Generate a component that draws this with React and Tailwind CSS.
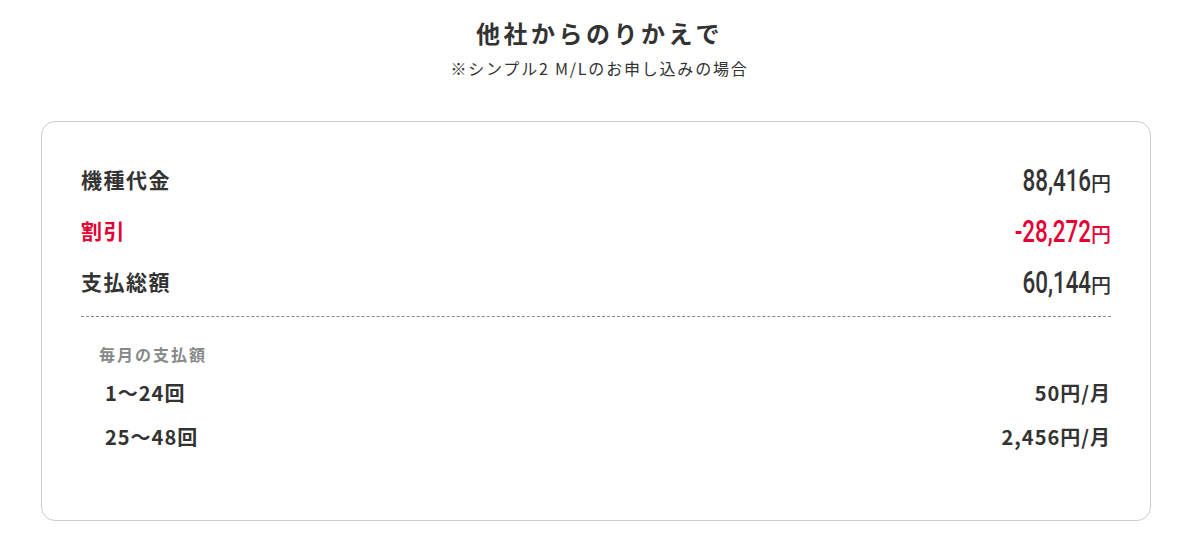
import React from "react";

const jp = { fontFamily: '"Noto Sans CJK JP", "Noto Sans", sans-serif' };
const num = { fontFamily: 'Roboto, "Liberation Sans", sans-serif' };

function Price({ value, red }) {
  return (
    <div className={`flex items-baseline ${red ? "text-[#e60033]" : "text-[#333]"}`}>
      <span style={num} className="inline-block origin-right scale-x-[0.7] text-[32px] font-medium leading-none">{value}</span>
      <span style={jp} className="text-[20px] font-medium leading-none">円</span>
    </div>
  );
}

export default function App() {
  return (
    <div className="w-[1199px] h-[540px] bg-white text-[#333]" style={jp}>
      <div className="flex flex-col items-center pt-[16px]">
        <h2 className="text-[24px] font-bold leading-[34px] tracking-[3.5px]">他社からのりかえで</h2>
        <p className="text-[16px] leading-[22px] mt-[7px] tracking-[1.8px]">※シンプル2 M/Lのお申し込みの場合</p>
      </div>
      <div className="ml-[41px] w-[1110px] mt-[42px] h-[400px] rounded-[14px] border border-[#cccccc] px-[39px] pt-[43px]">
        <div className="flex flex-col gap-[21px]">
          <div className="flex items-center justify-between h-[30px]">
            <span className="text-[21px] font-bold tracking-[1.5px]">機種代金</span>
            <Price value="88,416" />
          </div>
          <div className="flex items-center justify-between h-[30px]">
            <span className="text-[21px] font-bold tracking-[1.5px] text-[#e60033]">割引</span>
            <Price value="-28,272" red />
          </div>
          <div className="flex items-center justify-between h-[30px]">
            <span className="text-[21px] font-bold tracking-[1.5px]">支払総額</span>
            <Price value="60,144" />
          </div>
        </div>
        <div className="mt-[19px] border-t border-dashed border-[#888]" />
        <div className="pl-[18px] pt-[26px] text-[16px] font-bold text-[#888] leading-[22px] tracking-[2px]">毎月の支払額</div>
        <div className="flex flex-col gap-[16px] mt-[14px] pl-[24px]">
          <div className="flex justify-between items-center h-[28px]">
            <span className="text-[20px] font-bold tracking-[1px]">1〜24回</span>
            <span className="text-[20px] font-bold tracking-[1px]">50円/月</span>
          </div>
          <div className="flex justify-between items-center h-[28px]">
            <span className="text-[20px] font-bold tracking-[1px]">25〜48回</span>
            <span className="text-[20px] font-bold tracking-[1px]">2,456円/月</span>
          </div>
        </div>
      </div>
    </div>
  );
}
